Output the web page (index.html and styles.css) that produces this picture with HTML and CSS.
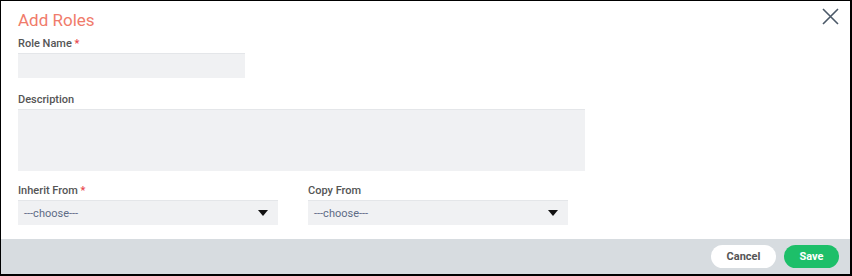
FILE: index.html
```html
<!DOCTYPE html>
<html lang="en">
<head>
  <meta charset="UTF-8">
  <title>Add Roles</title>
  <link rel="stylesheet" href="styles.css">
</head>
<body>
  <div class="modal">
    <div class="modal-body">
      <button class="close" type="button" aria-label="Close">
        <svg width="17" height="17" viewBox="0 0 17 17">
          <path d="M1 1L16 16M16 1L1 16" stroke="#4b5968" stroke-width="1.6" fill="none"/>
        </svg>
      </button>
      <h2 class="title">Add Roles</h2>

      <div class="form-group group-name">
        <label for="role_name">Role Name <span class="req">*</span></label>
        <input type="text" id="role_name" class="field field-name">
      </div>

      <div class="form-group group-desc">
        <label for="description">Description</label>
        <textarea id="description" class="field field-desc"></textarea>
      </div>

      <div class="form-row">
        <div class="form-group">
          <label for="inherit">Inherit From <span class="req">*</span></label>
          <div class="select">---choose---<span class="caret"></span></div>
        </div>
        <div class="form-group">
          <label for="copy">Copy From</label>
          <div class="select">---choose---<span class="caret"></span></div>
        </div>
      </div>
    </div>

    <footer class="modal-footer">
      <button class="btn btn-cancel" type="button">Cancel</button>
      <button class="btn btn-save" type="button">Save</button>
    </footer>
  </div>
</body>
</html>
```

FILE: styles.css
```css
body {
  margin: 0;
  font-family: Roboto, "Liberation Sans", sans-serif;
  background-color: #fff;
}

.modal {
  width: 852px;
  height: 276px;
  box-sizing: border-box;
  border: 1px solid #000;
  border-right-width: 2px;
  border-bottom-width: 2px;
  display: flex;
  flex-direction: column;
}

.modal-body {
  position: relative;
  flex: 1;
  padding: 9px 17px 0;
}

.close {
  position: absolute;
  top: 7px;
  right: 11px;
  padding: 0;
  border: none;
  background: none;
  width: 17px;
  height: 17px;
  cursor: pointer;
}

.close svg {
  display: block;
}

.title {
  margin: 0 0 7px;
  font-size: 17px;
  line-height: 20px;
  font-weight: 400;
  color: #f07b6b;
}

.group-name {
  margin-bottom: 15px;
}

.group-desc {
  margin-bottom: 13px;
}

label {
  display: block;
  font-size: 11px;
  line-height: 13px;
  font-weight: 500;
  color: #555;
  margin-bottom: 3px;
}

.req {
  color: #e8454a;
}

.field {
  display: block;
  box-sizing: border-box;
  border: none;
  border-top: 1px solid #e4e6e9;
  background-color: #f0f1f3;
  padding: 0 6px;
  margin: 0;
  font-family: inherit;
  resize: none;
}

.field-name {
  width: 227px;
  height: 25px;
}

.field-desc {
  width: 567px;
  height: 62px;
}

.form-row {
  display: flex;
  gap: 30px;
}

.select {
  position: relative;
  box-sizing: border-box;
  width: 260px;
  height: 25px;
  line-height: 25px;
  padding: 0 6px;
  background-color: #f0f1f3;
  border-top: 1px solid #e4e6e9;
  font-size: 11px;
  color: #5d6b85;
}

.caret {
  position: absolute;
  right: 10px;
  top: 9px;
  width: 0;
  height: 0;
  border-left: 5px solid transparent;
  border-right: 5px solid transparent;
  border-top: 6px solid #111;
}

.modal-footer {
  height: 35px;
  background-color: #d7dce0;
  display: flex;
  align-items: center;
  justify-content: flex-end;
  gap: 8px;
  padding-right: 11px;
}

.btn {
  height: 23px;
  border: none;
  border-radius: 12px;
  font-family: inherit;
  font-size: 11px;
  font-weight: 700;
  cursor: pointer;
}

.btn-cancel {
  width: 65px;
  background-color: #fff;
  color: #555;
}

.btn-save {
  width: 55px;
  background-color: #1dbf69;
  color: #fff;
}
```
